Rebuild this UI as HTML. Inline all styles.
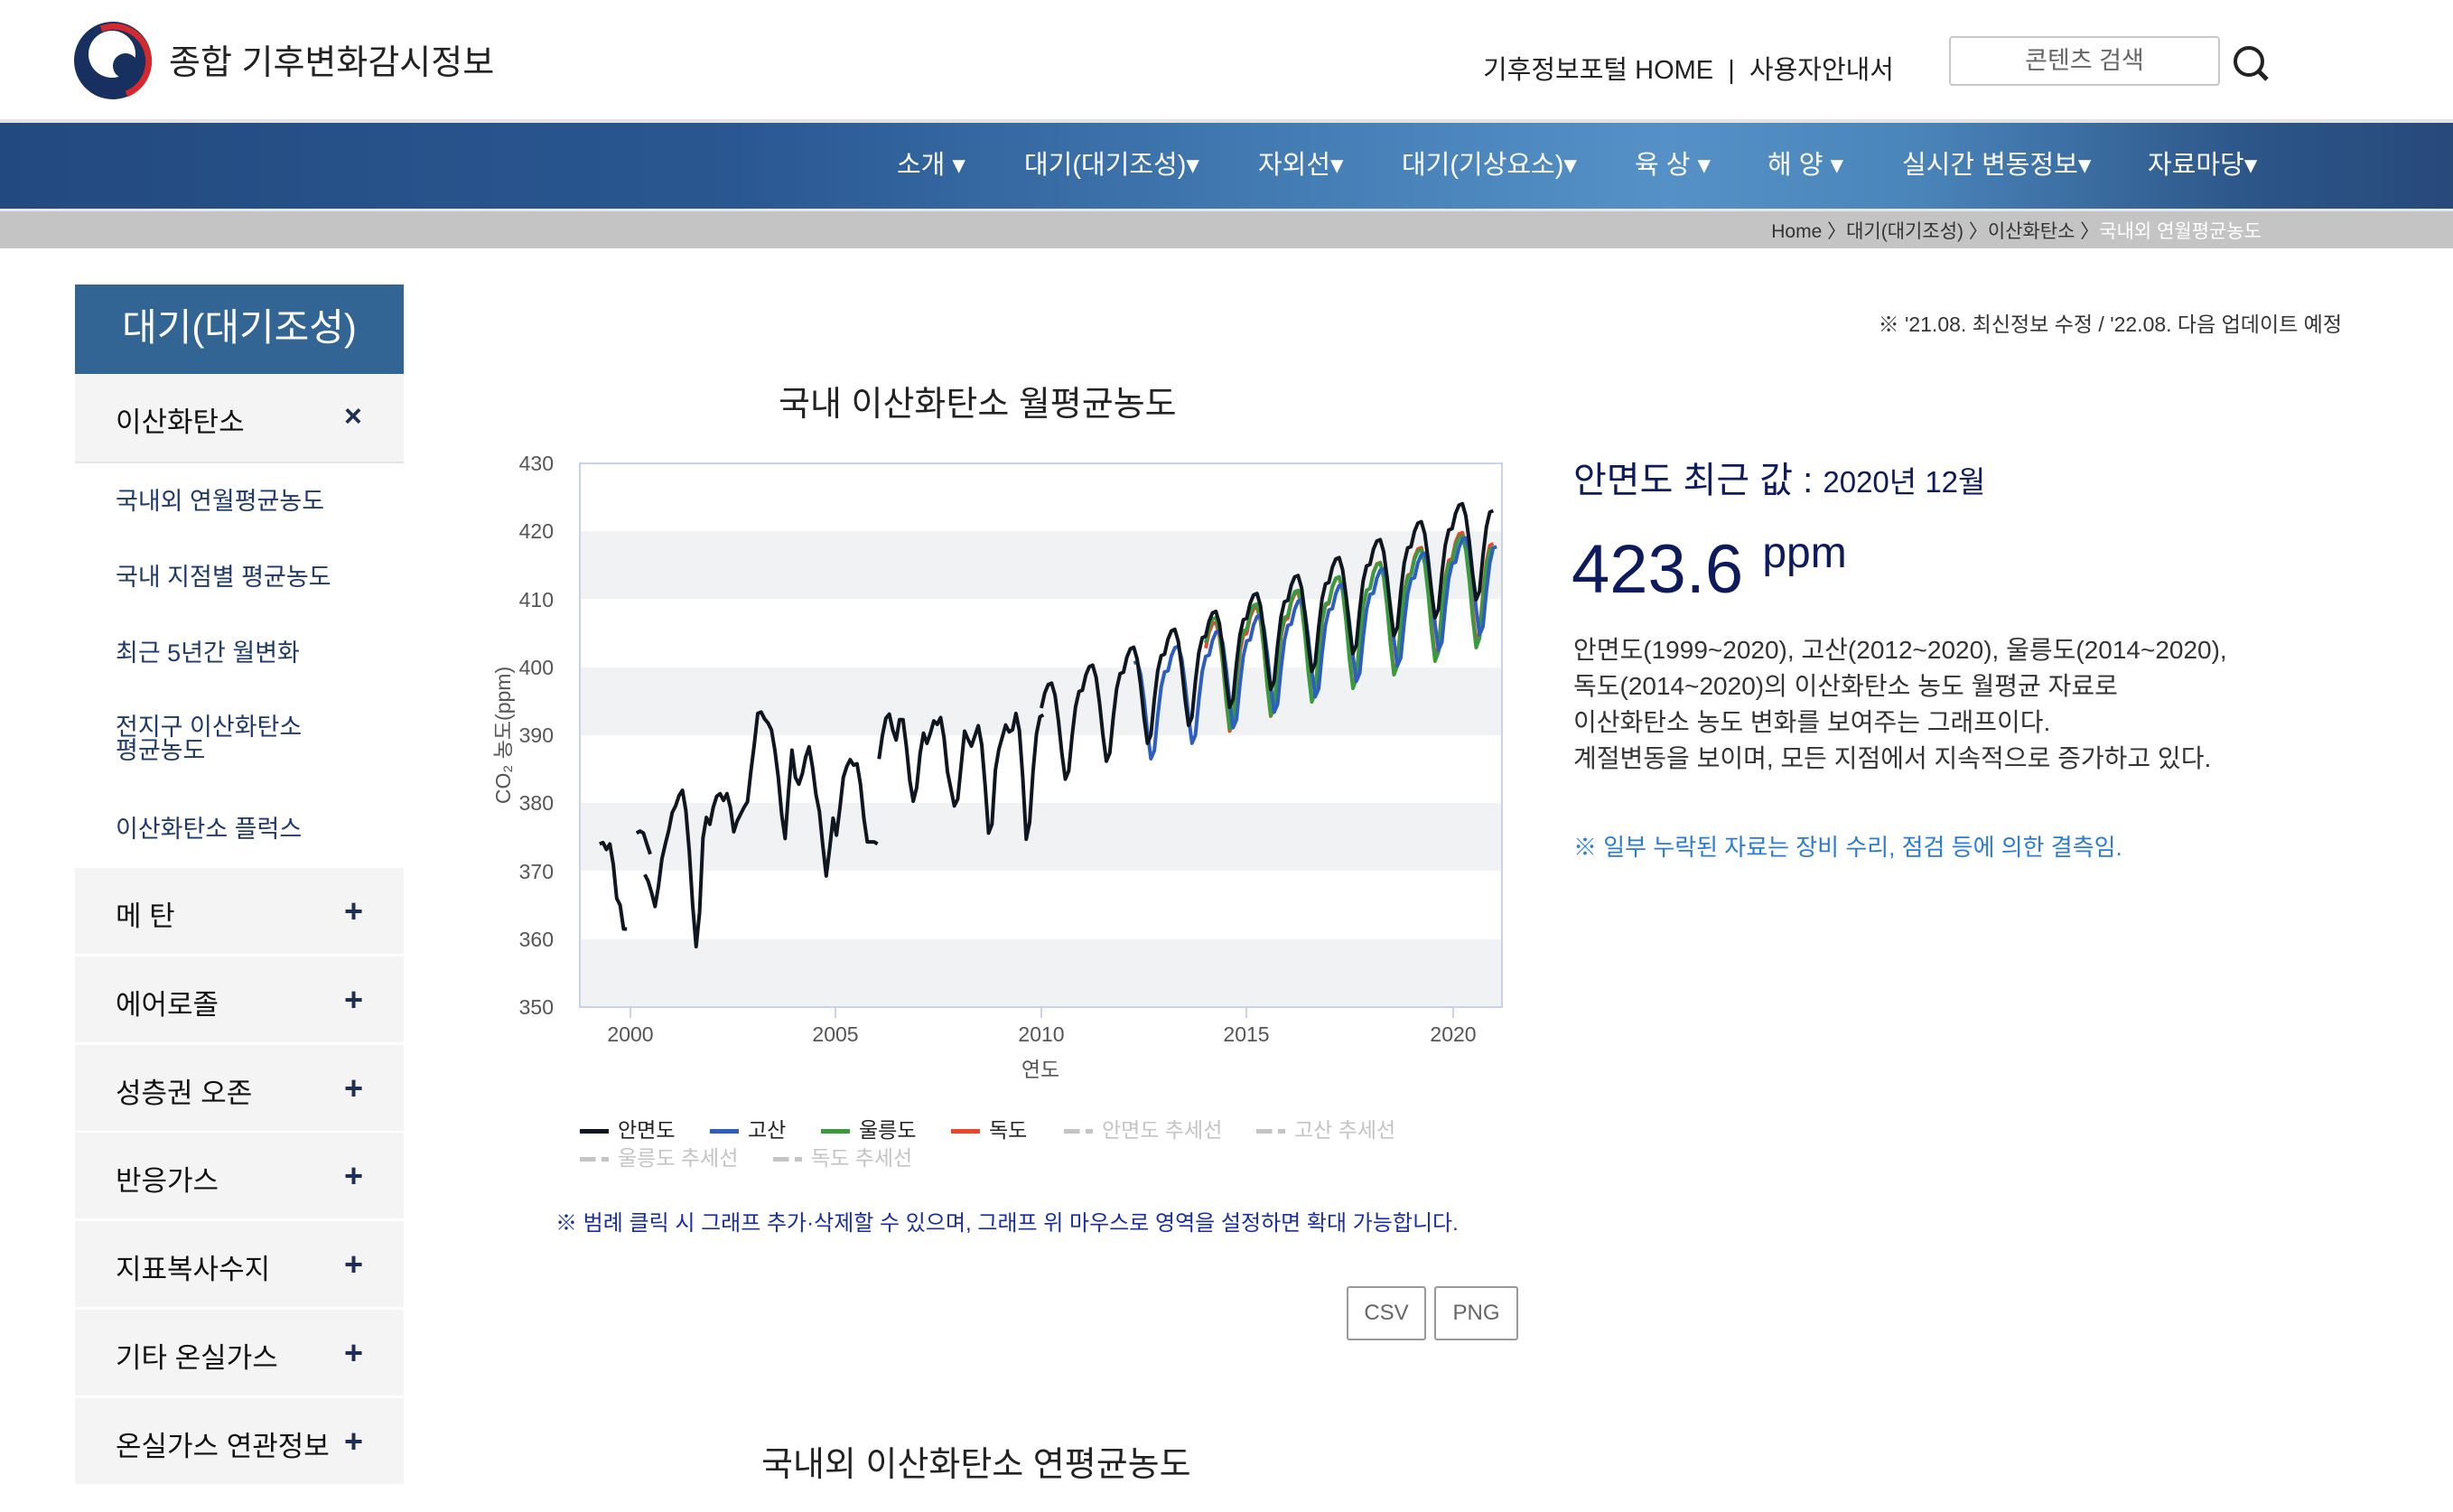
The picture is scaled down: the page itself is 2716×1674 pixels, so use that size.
<!DOCTYPE html>
<html><head><meta charset="utf-8">
<style>
*{margin:0;padding:0;box-sizing:border-box}
body{width:2716px;height:1674px;position:relative;background:#fff;overflow:hidden;font-family:"Liberation Sans","Noto Sans CJK KR",sans-serif;color:#222}
.a{position:absolute;white-space:nowrap}
.nav{position:absolute;left:0;top:132px;width:2716px;height:99px;background:linear-gradient(90deg,#234a80 0%,#2a5791 30%,#4680b7 55%,#5591c6 68%,#4a85ba 78%,#2c5588 92%,#27497a 100%);border-top:4px solid #e3e3e3}
.nav span{position:absolute;top:23px;color:#fff;font-size:29px}
.bc{position:absolute;left:0;top:231px;width:2716px;height:44px;background:#c4c4c4;border-top:3px solid #e8e8e8}
.side{position:absolute;left:83px;width:364px}
.sub{position:absolute;left:128px;color:#1f3a6b;font-size:27px;line-height:28px}
.row{position:absolute;left:83px;width:364px;height:95px;background:#f4f4f4}
.row b{position:absolute;left:45px;top:28px;font-weight:normal;font-size:31px;color:#111}
.row i{position:absolute;left:298px;top:27px;font-style:normal;font-size:36px;color:#1d2f55;font-weight:bold}
.leg{position:absolute;font-size:23px;color:#222}
.lg{display:inline-block;width:32px;height:5px;vertical-align:middle;margin-right:10px}
.btn{position:absolute;top:1424px;height:60px;border:2px solid #999;border-radius:3px;font-size:24px;color:#666;text-align:center;line-height:56px}
</style></head><body>

<svg class="a" style="left:80px;top:22px" width="92" height="92" viewBox="80 22 92 92">
<circle cx="125" cy="67" r="43" fill="#18305f"/>
<path d="M112 32 A38 38 0 0 1 140 104" stroke="#d42a2e" stroke-width="7" fill="none"/>
<circle cx="124" cy="60" r="26" fill="#fff"/>
<circle cx="139" cy="73" r="14" fill="#18305f"/>
</svg>
<div class="a" style="left:187px;top:38px;font-size:38px;color:#222">종합 기후변화감시정보</div>

<div class="a" style="left:1642px;top:54px;font-size:29px;color:#222">기후정보포털 HOME &nbsp;|&nbsp; 사용자안내서</div>
<div class="a" style="left:2158px;top:40px;width:300px;height:55px;border:2px solid #c8c8c8;border-radius:4px;font-size:27px;color:#666;text-align:center;line-height:50px">콘텐츠 검색</div>
<svg class="a" style="left:2470px;top:48px" width="46" height="46" viewBox="0 0 46 46"><circle cx="20" cy="20" r="15" stroke="#222" stroke-width="4" fill="none"/><line x1="31" y1="31" x2="40" y2="40" stroke="#222" stroke-width="5"/></svg>

<div class="nav">
<span style="left:993px">소개 ▾</span>
<span style="left:1134px">대기(대기조성)▾</span>
<span style="left:1393px">자외선▾</span>
<span style="left:1552px">대기(기상요소)▾</span>
<span style="left:1810px">육 상 ▾</span>
<span style="left:1957px">해 양 ▾</span>
<span style="left:2106px">실시간 변동정보▾</span>
<span style="left:2378px">자료마당▾</span>
</div>
<div class="bc"><div class="a" style="right:212px;top:6px;font-size:21px;color:#333">Home 〉대기(대기조성) 〉이산화탄소 〉<span style="color:#fff">국내외 연월평균농도</span></div></div>

<div class="side" style="top:315px;height:99px;background:#336594;color:#fff;font-size:42px;text-align:center;line-height:96px">대기(대기조성)</div>
<div class="side" style="top:414px;height:99px;background:#f4f4f4;border-bottom:2px solid #e4e4e4"><div class="a" style="left:45px;top:28px;font-size:31px;color:#111">이산화탄소</div><div class="a" style="left:298px;top:28px;font-size:34px;color:#1d2f55;font-weight:bold">×</div></div>
<div class="sub" style="top:541px">국내외 연월평균농도</div>
<div class="sub" style="top:625px">국내 지점별 평균농도</div>
<div class="sub" style="top:709px">최근 5년간 월변화</div>
<div class="sub" style="top:792px;line-height:26px">전지구 이산화탄소<br>평균농도</div>
<div class="sub" style="top:904px">이산화탄소 플럭스</div>
<div class="row" style="top:961px"><b>메 탄</b><i>+</i></div>
<div class="row" style="top:1059px"><b>에어로졸</b><i>+</i></div>
<div class="row" style="top:1157px"><b>성층권 오존</b><i>+</i></div>
<div class="row" style="top:1254px"><b>반응가스</b><i>+</i></div>
<div class="row" style="top:1352px"><b>지표복사수지</b><i>+</i></div>
<div class="row" style="top:1450px"><b>기타 온실가스</b><i>+</i></div>
<div class="row" style="top:1548px"><b>온실가스 연관정보</b><i>+</i></div>

<div class="a" style="right:123px;top:340px;font-size:23px;color:#333">※ '21.08. 최신정보 수정 / '22.08. 다음 업데이트 예정</div>

<div class="a" style="left:862px;top:416px;font-size:38px;color:#222">국내 이산화탄소 월평균농도</div>

<svg class="a" style="left:0;top:0" width="2716" height="1674">
<rect x="642" y="513" width="1021" height="602" fill="#fff"/>
<rect x="642" y="588" width="1021" height="75" fill="#f1f2f4"/>
<rect x="642" y="739" width="1021" height="75" fill="#f1f2f4"/>
<rect x="642" y="889" width="1021" height="75" fill="#f1f2f4"/>
<rect x="642" y="1040" width="1021" height="75" fill="#f1f2f4"/>
<rect x="642" y="513" width="1021" height="602" fill="none" stroke="#c9d3e8" stroke-width="2"/>
<g stroke="#c9d3e8" stroke-width="2"><line x1="698" y1="1115" x2="698" y2="1127"/><line x1="925" y1="1115" x2="925" y2="1127"/><line x1="1153" y1="1115" x2="1153" y2="1127"/><line x1="1380" y1="1115" x2="1380" y2="1127"/><line x1="1609" y1="1115" x2="1609" y2="1127"/></g>
<g font-family="Liberation Sans,sans-serif" font-size="23" fill="#555" text-anchor="end">
<text x="613" y="521">430</text><text x="613" y="596">420</text><text x="613" y="672">410</text><text x="613" y="747">400</text><text x="613" y="822">390</text><text x="613" y="897">380</text><text x="613" y="973">370</text><text x="613" y="1048">360</text><text x="613" y="1123">350</text>
</g>
<g font-family="Liberation Sans,sans-serif" font-size="23" fill="#555" text-anchor="middle">
<text x="698" y="1153">2000</text><text x="925" y="1153">2005</text><text x="1153" y="1153">2010</text><text x="1380" y="1153">2015</text><text x="1609" y="1153">2020</text>
<text x="1152" y="1192" font-family="Liberation Sans,Noto Sans CJK KR,sans-serif">연도</text>
</g>
<text transform="translate(565,814) rotate(-90)" text-anchor="middle" font-family="Liberation Sans,Noto Sans CJK KR,sans-serif" font-size="23" fill="#555">CO₂ 농도(ppm)</text>
<defs><clipPath id="c"><rect x="642" y="513" width="1021" height="602"/></clipPath></defs>
<g clip-path="url(#c)" fill="none" stroke-width="4" stroke-linejoin="round">
<g transform="translate(698,3748.75) scale(45.5,-7.525)">
<path vector-effect="non-scaling-stroke" stroke="#e8472a" d="M14 402.8 l.0833 2.4 .0833 1.2 .0833 .2 .0833 -2 .0833 -4.2 .0833 -5.4 .0833 -4.4 .0833 1.3 .0833 5.8 .0833 4.6 .0833 2.4 .0833 .3 l.0833 2.4 .0833 1.2 .0833 .2 .0833 -2 .0833 -4.2 .0833 -5.4 .0833 -4.4 .0833 1.3 .0833 5.8 .0833 4.6 .0833 2.4 .0833 .3 l.0833 2.4 .0833 1.2 .0833 .2 .0833 -2 .0833 -4.2 .0833 -5.4 .0833 -4.4 .0833 1.3 .0833 5.8 .0833 4.6 .0833 2.4 .0833 .3 l.0833 2.4 .0833 1.2 .0833 .2 .0833 -2 .0833 -4.2 .0833 -5.4 .0833 -4.4 .0833 1.3 .0833 5.8 .0833 4.6 .0833 2.4 .0833 .3 l.0833 2.4 .0833 1.2 .0833 .2 .0833 -2 .0833 -4.2 .0833 -5.4 .0833 -4.4 .0833 1.3 .0833 5.8 .0833 4.6 .0833 2.4 .0833 .3 l.0833 2.4 .0833 1.2 .0833 .2 .0833 -2 .0833 -4.2 .0833 -5.4 .0833 -4.4 .0833 1.3 .0833 5.8 .0833 4.6 .0833 2.4 .0833 .3 l.0833 2.4 .0833 1.2 .0833 .2 .0833 -2 .0833 -4.2 .0833 -5.4 .0833 -4.4 .0833 1.3 .0833 5.8 .0833 4.6 .0833 2.4 .0833 .3"/>
<path vector-effect="non-scaling-stroke" stroke="#3a9a3e" d="M14 403.6 l.0833 2.3 .0833 1.2 .0833 .2 .0833 -2.1 .0833 -4.4 .0833 -5.6 .0833 -4.3 .0833 1.4 .0833 6 .0833 4.7 .0833 2.3 .0833 .3 l.0833 2.3 .0833 1.2 .0833 .2 .0833 -2.1 .0833 -4.4 .0833 -5.6 .0833 -4.3 .0833 1.4 .0833 6 .0833 4.7 .0833 2.3 .0833 .3 l.0833 2.3 .0833 1.2 .0833 .2 .0833 -2.1 .0833 -4.4 .0833 -5.6 .0833 -4.3 .0833 1.4 .0833 6 .0833 4.7 .0833 2.3 .0833 .3 l.0833 2.3 .0833 1.2 .0833 .2 .0833 -2.1 .0833 -4.4 .0833 -5.6 .0833 -4.3 .0833 1.4 .0833 6 .0833 4.7 .0833 2.3 .0833 .3 l.0833 2.3 .0833 1.2 .0833 .2 .0833 -2.1 .0833 -4.4 .0833 -5.6 .0833 -4.3 .0833 1.4 .0833 6 .0833 4.7 .0833 2.3 .0833 .3 l.0833 2.3 .0833 1.2 .0833 .2 .0833 -2.1 .0833 -4.4 .0833 -5.6 .0833 -4.3 .0833 1.4 .0833 6 .0833 4.7 .0833 2.3 .0833 .3 l.0833 2.3 .0833 1.2 .0833 .2 .0833 -2.1 .0833 -4.4 .0833 -5.6 .0833 -4.3 .0833 1.4 .0833 6 .0833 4.7 .0833 2.3 .0833 .3"/>
<path vector-effect="non-scaling-stroke" stroke="#2c5fbf" d="M12.25 400.6 l.0833 .19 .0833 -1.81 .0833 -3.81 .0833 -4.81 .0833 -3.81 .0833 1.19 .0833 5.19 .0833 4.19 .0833 2.19 .0833 .19 l.0833 2.19 .0833 1.19 .0833 .19 .0833 -1.81 .0833 -3.81 .0833 -4.81 .0833 -3.81 .0833 1.19 .0833 5.19 .0833 4.19 .0833 2.19 .0833 .19 l.0833 2.19 .0833 1.19 .0833 .19 .0833 -1.81 .0833 -3.81 .0833 -4.81 .0833 -3.81 .0833 1.19 .0833 5.19 .0833 4.19 .0833 2.19 .0833 .19 l.0833 2.19 .0833 1.19 .0833 .19 .0833 -1.81 .0833 -3.81 .0833 -4.81 .0833 -3.81 .0833 1.19 .0833 5.19 .0833 4.19 .0833 2.19 .0833 .19 l.0833 2.19 .0833 1.19 .0833 .19 .0833 -1.81 .0833 -3.81 .0833 -4.81 .0833 -3.81 .0833 1.19 .0833 5.19 .0833 4.19 .0833 2.19 .0833 .19 l.0833 2.19 .0833 1.19 .0833 .19 .0833 -1.81 .0833 -3.81 .0833 -4.81 .0833 -3.81 .0833 1.19 .0833 5.19 .0833 4.19 .0833 2.19 .0833 .19 l.0833 2.19 .0833 1.19 .0833 .19 .0833 -1.81 .0833 -3.81 .0833 -4.81 .0833 -3.81 .0833 1.19 .0833 5.19 .0833 4.19 .0833 2.19 .0833 .19 l.0833 2.19 .0833 1.19 .0833 .19 .0833 -1.81 .0833 -3.81 .0833 -4.81 .0833 -3.81 .0833 1.19 .0833 5.19 .0833 4.19 .0833 2.19 .0833 .19 l.0833 2.19 .0833 1.19 .0833 .19 .0833 -1.81 .0833 -3.81 .0833 -4.81 .0833 -3.81 .0833 1.19 .0833 5.19 .0833 4.19 .0833 2.19 .0833 .19"/>
<path vector-effect="non-scaling-stroke" stroke="#0e1620" d="M-.75 374 l.0833 .2 .0833 -1 .0833 .8 .0833 -3 .0833 -5 .0833 -1 .0833 -3.5 .0833 0 M.15 375.6 l.0833 .3 .0833 -.3 .0833 -1.6 .0833 -1.5 M.35 369.5 l.0833 -1 .0833 -1.7 .0833 -2 .0833 3 .0833 4 .0833 2.2 .0833 2 .0833 2.6 .0833 1 .0833 1.5 l.0833 .8 .0833 -3 .0833 -6 .0833 -8 .0833 -6 .0833 5 .0833 11 .0833 3 .0833 -1 .0833 2.5 .0833 1.6 .0833 .4 l.0833 -1 .0833 1 .0833 -2 .0833 -3.6 .0833 1.6 .0833 1 .0833 1 .0833 .8 .0833 4.5 .0833 4 .0833 4.5 .0833 .2 l.0833 -1 .0833 -.6 .0833 -1 .0833 -3 .0833 -4 .0833 -5.5 .0833 -3.5 .0833 7 .0833 6 .0833 -4 .0833 -1 .0833 1.5 l.0833 2.5 .0833 1.5 .0833 -3 .0833 -4 .0833 -2.5 .0833 -5 .0833 -4.5 .0833 4 .0833 4.5 .0833 -2.5 .0833 4 .0833 4.5 l.0833 1.6 .0833 1 .0833 -.8 .0833 .2 .0833 -3 .0833 -5 .0833 -3.5 .0833 0 .0833 0 .0833 -.3 M6.05 386.5 l.0833 3.5 .0833 2.5 .0833 .6 .0833 -2.3 .0833 -1.5 .0833 3 .0833 0 .0833 -4 .0833 -5 .0833 -3 .0833 2 .0833 5 l.0833 3 .0833 -1.5 .0833 1.5 .0833 1.8 .0833 -.5 .0833 1 .0833 -3 .0833 -5 .0833 -2.5 .0833 -2.5 .0833 1 .0833 5 l.0833 5 .0833 -1.2 .0833 -1 .0833 1.5 .0833 1.5 .0833 -2.8 .0833 -6 .0833 -7 .0833 1.3 .0833 8 .0833 3 .0833 1.8 l.0833 1.8 .0833 -1 .0833 .3 .0833 2.4 .0833 -2.5 .0833 -7 .0833 -9 .0833 2.5 .0833 7.5 .0833 5.5 .0833 2.5 .0833 .3 M10 394 l.0833 2.22 .0833 1.22 .0833 .22 .0833 -1.78 .0833 -3.78 .0833 -4.78 .0833 -3.78 .0833 1.22 .0833 5.22 .0833 4.22 .0833 2.22 .0833 .22 l.0833 2.22 .0833 1.22 .0833 .22 .0833 -1.78 .0833 -3.78 .0833 -4.78 .0833 -3.78 .0833 1.22 .0833 5.22 .0833 4.22 .0833 2.22 .0833 .22 l.0833 2.22 .0833 1.22 .0833 .22 .0833 -1.78 .0833 -3.78 .0833 -4.78 .0833 -3.78 .0833 1.22 .0833 5.22 .0833 4.22 .0833 2.22 .0833 .22 l.0833 2.22 .0833 1.22 .0833 .22 .0833 -1.78 .0833 -3.78 .0833 -4.78 .0833 -3.78 .0833 1.22 .0833 5.22 .0833 4.22 .0833 2.22 .0833 .22 l.0833 2.22 .0833 1.22 .0833 .22 .0833 -1.78 .0833 -3.78 .0833 -4.78 .0833 -3.78 .0833 1.22 .0833 5.22 .0833 4.22 .0833 2.22 .0833 .22 l.0833 2.22 .0833 1.22 .0833 .22 .0833 -1.78 .0833 -3.78 .0833 -4.78 .0833 -3.78 .0833 1.22 .0833 5.22 .0833 4.22 .0833 2.22 .0833 .22 l.0833 2.22 .0833 1.22 .0833 .22 .0833 -1.78 .0833 -3.78 .0833 -4.78 .0833 -3.78 .0833 1.22 .0833 5.22 .0833 4.22 .0833 2.22 .0833 .22 l.0833 2.22 .0833 1.22 .0833 .22 .0833 -1.78 .0833 -3.78 .0833 -4.78 .0833 -3.78 .0833 1.22 .0833 5.22 .0833 4.22 .0833 2.22 .0833 .22 l.0833 2.22 .0833 1.22 .0833 .22 .0833 -1.78 .0833 -3.78 .0833 -4.78 .0833 -3.78 .0833 1.22 .0833 5.22 .0833 4.22 .0833 2.22 .0833 .22 l.0833 2.22 .0833 1.22 .0833 .22 .0833 -1.78 .0833 -3.78 .0833 -4.78 .0833 -3.78 .0833 1.22 .0833 5.22 .0833 4.22 .0833 2.22 .0833 .22 l.0833 2.22 .0833 1.22 .0833 .22 .0833 -1.78 .0833 -3.78 .0833 -4.78 .0833 -3.78 .0833 1.22 .0833 5.22 .0833 4.22 .0833 2.22 .0833 .22"/>
</g>
</g>
</svg>

<div class="leg" style="left:642px;top:1232px"><span class="lg" style="background:#0e1620"></span>안면도</div>
<div class="leg" style="left:786px;top:1232px"><span class="lg" style="background:#2c5fbf"></span>고산</div>
<div class="leg" style="left:909px;top:1232px"><span class="lg" style="background:#3a9a3e"></span>울릉도</div>
<div class="leg" style="left:1053px;top:1232px"><span class="lg" style="background:#e8472a"></span>독도</div>
<div class="leg" style="left:1178px;top:1232px;color:#c4c4c4"><span class="lg" style="background:linear-gradient(90deg,#c4c4c4 55%,#fff 55%,#fff 75%,#c4c4c4 75%)"></span>안면도 추세선</div>
<div class="leg" style="left:1391px;top:1232px;color:#c4c4c4"><span class="lg" style="background:linear-gradient(90deg,#c4c4c4 55%,#fff 55%,#fff 75%,#c4c4c4 75%)"></span>고산 추세선</div>
<div class="leg" style="left:642px;top:1263px;color:#c4c4c4"><span class="lg" style="background:linear-gradient(90deg,#c4c4c4 55%,#fff 55%,#fff 75%,#c4c4c4 75%)"></span>울릉도 추세선</div>
<div class="leg" style="left:856px;top:1263px;color:#c4c4c4"><span class="lg" style="background:linear-gradient(90deg,#c4c4c4 55%,#fff 55%,#fff 75%,#c4c4c4 75%)"></span>독도 추세선</div>

<div class="a" style="left:615px;top:1334px;font-size:24px;color:#1b2ea0">※ 범례 클릭 시 그래프 추가·삭제할 수 있으며, 그래프 위 마우스로 영역을 설정하면 확대 가능합니다.</div>
<div class="btn" style="left:1491px;width:88px">CSV</div>
<div class="btn" style="left:1588px;width:93px">PNG</div>

<div class="a" style="left:843px;top:1590px;font-size:38px;color:#222">국내외 이산화탄소 연평균농도</div>

<div class="a" style="left:1742px;top:499px;font-size:40px;color:#0d1a5c">안면도 최근 값 : <span style="font-size:33px">2020년 12월</span></div>
<div class="a" style="left:1740px;top:568px;font-size:76px;color:#0d1a5c;line-height:90px">423.6 <span style="font-size:48px;vertical-align:28px">ppm</span></div>
<div class="a" style="left:1742px;top:700px;font-size:28px;color:#333;line-height:40px">안면도(1999~2020), 고산(2012~2020), 울릉도(2014~2020),<br>독도(2014~2020)의 이산화탄소 농도 월평균 자료로<br>이산화탄소 농도 변화를 보여주는 그래프이다.<br>계절변동을 보이며, 모든 지점에서 지속적으로 증가하고 있다.</div>
<div class="a" style="left:1742px;top:918px;font-size:26px;color:#2a7bd4">※ 일부 누락된 자료는 장비 수리, 점검 등에 의한 결측임.</div>

</body></html>
